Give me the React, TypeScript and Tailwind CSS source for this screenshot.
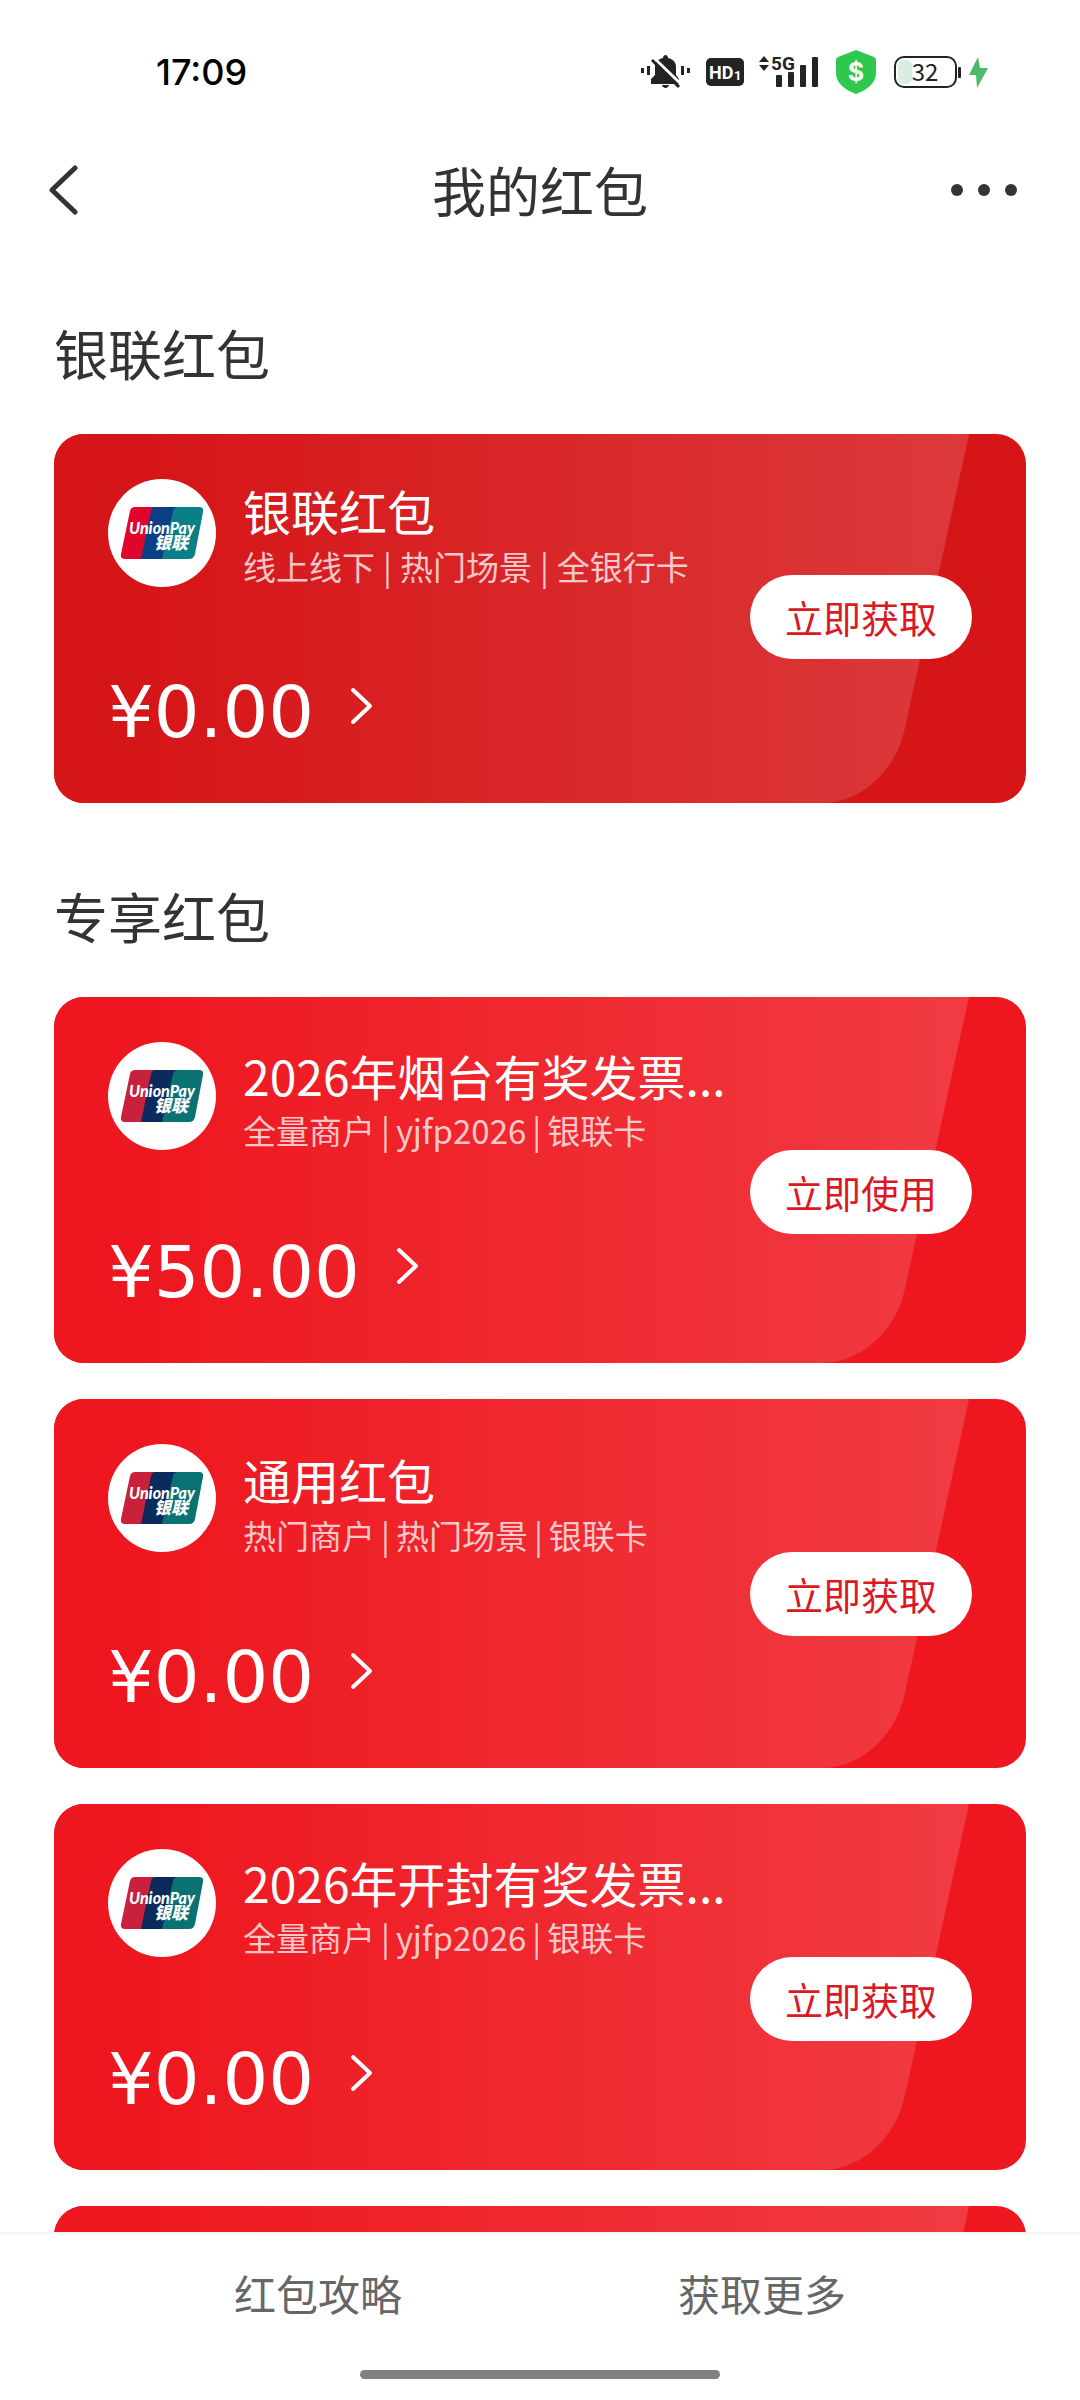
type Coupon = {
  title: string
  tags: string[]
  amount: string
  action: string
  compact?: boolean
}

const coupons: Coupon[] = [
  {
    title: "2026年烟台有奖发票...",
    tags: ["全量商户", "yjfp2026", "银联卡"],
    amount: "¥50.00",
    action: "立即使用",
    compact: true,
  },
  { title: "通用红包", tags: ["热门商户", "热门场景", "银联卡"], amount: "¥0.00", action: "立即获取" },
  {
    title: "2026年开封有奖发票...",
    tags: ["全量商户", "yjfp2026", "银联卡"],
    amount: "¥0.00",
    action: "立即获取",
    compact: true,
  },
  { title: "通用红包", tags: ["热门商户", "热门场景", "银联卡"], amount: "¥0.00", action: "立即获取" },
]

function StatusBar() {
  return (
    <div className="flex h-36 shrink-0 items-center justify-between pr-[92px] pl-[156px]">
      <span className="font-['Inter',sans-serif] text-4xl leading-10 font-medium text-black">17:09</span>
      <div className="flex items-center text-[#232323]">
        {/* Muted bell */}
        <svg width="50" height="44" viewBox="0 0 50 44" fill="currentColor" aria-hidden="true">
          <rect x="0" y="18" width="3" height="5" />
          <rect x="6" y="16" width="3" height="9" />
          <rect x="40" y="16" width="3" height="9" />
          <rect x="46" y="18" width="3" height="5" />
          <path d="M10 34v-5l4-4v-8c0-5 3-8 8-9 0-4 5-4 5 0 5 1 8 4 8 9v8l3 4v5z" />
          <path d="M21 35h7c-1 4-6 4-7 0z" />
          <path d="M12 7L42 36" stroke="#fff" strokeWidth="3" />
          <path d="M11 10L38 37" stroke="currentColor" strokeWidth="3" />
        </svg>
        <svg className="ml-[14px]" width="40" height="44" viewBox="0 0 40 44" aria-hidden="true">
          <rect x="1" y="8" width="38" height="28" rx="5" fill="currentColor" />
          <text x="4" y="29" fill="#fff" fontFamily="Roboto, sans-serif" fontWeight="700" fontSize="18">HD</text>
          <text x="29" y="30" fill="#fff" fontFamily="Roboto, sans-serif" fontWeight="700" fontSize="13">1</text>
        </svg>
        <svg className="ml-[13px]" width="61" height="44" viewBox="0 0 61 44" fill="currentColor" aria-hidden="true">
          <path d="M1 12l5-6 5 6zM1 15h10l-5 6z" />
          <text x="13" y="20" fontFamily="Roboto, sans-serif" fontWeight="700" fontSize="19">5G</text>
          <rect x="18" y="25" width="6" height="12" rx="1" />
          <rect x="30" y="22" width="6" height="15" rx="1" />
          <rect x="42" y="15" width="6" height="22" rx="1" />
          <rect x="54" y="7" width="6" height="30" rx="1" />
        </svg>
        <svg className="ml-[17px]" width="40" height="44" viewBox="0 0 40 44" aria-hidden="true">
          <path d="M20 0L38 7q2 1 2 3v13c0 10-9 17-20 21C9 40 0 33 0 23V10q0-2 2-3z" fill="#2dc84d" />
          <text x="20" y="31" textAnchor="middle" fill="#fff" fontFamily="Inter, sans-serif" fontWeight="700" fontSize="25">$</text>
        </svg>
        <svg className="ml-[18px]" width="68" height="44" viewBox="0 0 68 44" aria-hidden="true">
          <rect x="4" y="10" width="14" height="24" rx="5" fill="#d9eee1" />
          <rect x="1" y="7" width="61" height="30" rx="9" fill="none" stroke="currentColor" strokeWidth="2" />
          <rect x="64" y="17" width="3" height="11" rx="1" fill="currentColor" />
          <text x="31" y="31" textAnchor="middle" fill="currentColor" fontFamily="Noto Sans CJK SC, sans-serif" fontSize="24">32</text>
        </svg>
        <svg className="ml-1.5" width="20" height="44" viewBox="0 0 20 44" aria-hidden="true">
          <path d="M10 7L1 25h7l1 13L20 18h-8z" fill="#4cb96b" />
        </svg>
      </div>
    </div>
  )
}

function Header() {
  return (
    <header className="grid h-[92px] shrink-0 grid-cols-[1fr_auto_1fr] items-center px-12 text-[#333]">
      <button type="button" aria-label="返回" className="justify-self-start">
        <svg width="30" height="52" viewBox="0 0 30 52" fill="none" stroke="currentColor" strokeWidth="5" strokeLinecap="round" strokeLinejoin="round">
          <path d="M27 4L4 26l23 22" />
        </svg>
      </button>
      <h1 className="text-[54px] leading-[60px]">我的红包</h1>
      <button type="button" aria-label="更多" className="justify-self-end pr-3.5">
        <svg width="68" height="14" viewBox="0 0 68 14" fill="currentColor">
          <circle cx="7" cy="7" r="6" />
          <circle cx="34" cy="7" r="6" />
          <circle cx="61" cy="7" r="6" />
        </svg>
      </button>
    </header>
  )
}

function UnionPayLogo({ dark }: { dark: boolean }) {
  return (
    <svg className="size-[108px] shrink-0 rounded-full bg-white" viewBox="0 0 108 108" role="img" aria-label="UnionPay 银联">
      <path d="M27 28H50L38 80H17q-5 0-4-5L22 32q1-4 5-4z" fill={dark ? "#c9203c" : "#e0052d"} />
      <path d="M47 28H72L60 80H33L43 32q1-4 4-4z" fill={dark ? "#0a2b5c" : "#0b3f86"} />
      <path d="M70 28H91q5 0 4 5L87 75q-1 5-6 5H54L65 32q1-4 5-4z" fill={dark ? "#0b7274" : "#0b7f86"} />
      <text x="21" y="55" fill="#fff" fontFamily="Lato, sans-serif" fontStyle="italic" fontWeight="900" fontSize="16">UnionPay</text>
      <text x="46" y="70" fill="#fff" fontFamily="Noto Sans CJK SC, sans-serif" fontStyle="italic" fontWeight="900" fontSize="17">银联</text>
    </svg>
  )
}

function CouponCard({ coupon, featured = false }: { coupon: Coupon; featured?: boolean }) {
  const titleLeading = featured ? "leading-[56px]" : coupon.compact ? "leading-[61px]" : "leading-[64px]"

  return (
    <article
      className={`relative isolate flex shrink-0 items-start justify-between overflow-hidden rounded-[30px] px-[54px] text-white ${
        featured ? "bg-[#d61518]" : "bg-[#ee171f]"
      }`}
    >
      {/* Lighter sheet behind the content */}
      <svg className="absolute inset-0 -z-10 size-full" viewBox="0 0 972 369" preserveAspectRatio="none" aria-hidden="true">
        <defs>
          <linearGradient id={featured ? "sheet-featured" : "sheet"}>
            <stop offset="0.1" stopColor={featured ? "#d61518" : "#ee171f"} />
            <stop offset="1" stopColor={featured ? "#dc393b" : "#f13b42"} />
          </linearGradient>
        </defs>
        <path
          d="M0 0H915L850 298C842 332 812 367 771 369H0Z"
          fill={featured ? "url(#sheet-featured)" : "url(#sheet)"}
        />
      </svg>

      <div className="pt-[45px] pb-[55px]">
        <div className="flex items-start gap-[27px]">
          <UnionPayLogo dark={!featured} />
          <div className="pt-[3px]">
            <h3 className={`text-5xl ${titleLeading}`}>{coupon.title}</h3>
            <p className={`flex text-[33px] text-white/75 ${featured ? "gap-2 leading-14" : "gap-1.5 leading-12"}`}>
              {coupon.tags.map((tag, i) => (
                <span key={tag} className={featured ? "flex gap-2" : "flex gap-1.5"}>
                  {i > 0 && <span>|</span>}
                  {tag}
                </span>
              ))}
            </p>
          </div>
        </div>
        <a href="#detail" className="mt-[82px] flex w-fit items-center gap-9">
          <span className="font-['DejaVu_Sans',sans-serif] text-[72px] leading-[72px]">{coupon.amount}</span>
          <svg className="mb-3" width="24" height="38" viewBox="0 0 24 38" fill="none" stroke="currentColor" strokeWidth="4" strokeLinecap="round" strokeLinejoin="round" aria-hidden="true">
            <path d="M3 3l17 16L3 35" />
          </svg>
        </a>
      </div>

      <button
        type="button"
        className={`h-[84px] w-[222px] rounded-full bg-white text-[38px] leading-[84px] text-[#dc1825] ${
          featured ? "mt-[141px]" : "mt-[153px]"
        }`}
      >
        {coupon.action}
      </button>
    </article>
  )
}

export default function App() {
  return (
    <div className="flex h-screen flex-col bg-white font-['Noto_Sans_CJK_SC',sans-serif]">
      <StatusBar />
      <Header />

      <main className="min-h-0 flex-1 overflow-y-auto px-[54px] pt-[90px] [scrollbar-width:none]">
        <section>
          <h2 className="mb-[54px] text-[54px] leading-[54px] text-[#333]">银联红包</h2>
          <CouponCard
            featured
            coupon={{
              title: "银联红包",
              tags: ["线上线下", "热门场景", "全银行卡"],
              amount: "¥0.00",
              action: "立即获取",
            }}
          />
        </section>

        <section className="mt-[86px]">
          <h2 className="mb-[54px] text-[54px] leading-[54px] text-[#333]">专享红包</h2>
          <div className="flex flex-col gap-9">
            {coupons.map((coupon, i) => (
              <CouponCard key={i} coupon={coupon} />
            ))}
          </div>
        </section>
      </main>

      <footer className="shrink-0 border-t-3 border-[#f5f5f5] bg-white pb-[21px]">
        <nav className="grid grid-cols-2 px-24 pt-7 pb-[47px] text-center text-[42px] leading-[60px] text-[#666]">
          <a href="#guide">红包攻略</a>
          <a href="#more">获取更多</a>
        </nav>
        <div className="mx-auto h-[9px] w-1/3 rounded-full bg-[#808080]" />
      </footer>
    </div>
  )
}
